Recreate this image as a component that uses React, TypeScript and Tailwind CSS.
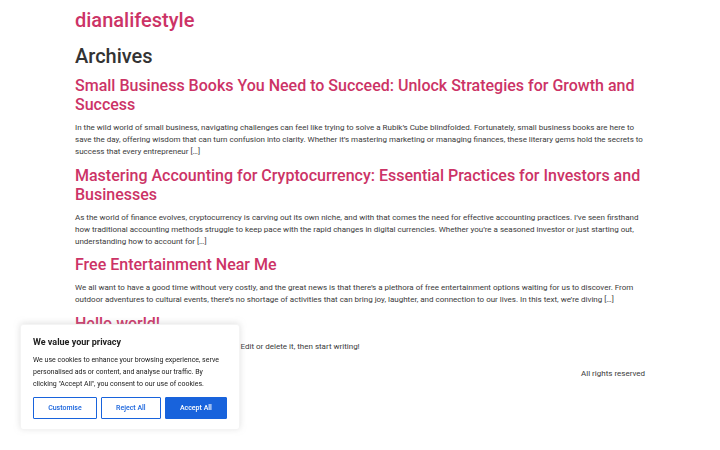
import React from "react";

const pink = "text-[#cc3366]";

function Post({ title, excerpt, first }: { title: string; excerpt: string; first?: boolean }) {
  return (
    <article className="flex flex-col">
      <h2 className={`${first ? "mt-[8px]" : "mt-[7.2px]"} text-[16px] leading-[19.2px] font-medium ${pink}`}>
        <a href="#">{title}</a>
      </h2>
      <p className="mt-[8px] text-[8px] leading-[12px] text-[#3a3a3a]">{excerpt}</p>
    </article>
  );
}

export default function App() {
  return (
    <div
      className="relative min-h-[450px] w-[720px] bg-white"
      style={{ fontFamily: "Roboto, 'Liberation Sans', sans-serif" }}
    >
      <div className="mx-auto flex w-[570px] flex-col">
        <h1 className={`mt-[8px] text-[20px] leading-[24px] font-medium ${pink}`}>
          <a href="#">dianalifestyle</a>
        </h1>
        <h1 className="mt-[12px] text-[20px] leading-[24px] font-medium text-[#333333]">Archives</h1>
        <Post
          first
          title="Small Business Books You Need to Succeed: Unlock Strategies for Growth and Success"
          excerpt="In the wild world of small business, navigating challenges can feel like trying to solve a Rubik’s Cube blindfolded. Fortunately, small business books are here to save the day, offering wisdom that can turn confusion into clarity. Whether it’s mastering marketing or managing finances, these literary gems hold the secrets to success that every entrepreneur […]"
        />
        <Post
          title="Mastering Accounting for Cryptocurrency: Essential Practices for Investors and Businesses"
          excerpt="As the world of finance evolves, cryptocurrency is carving out its own niche, and with that comes the need for effective accounting practices. I’ve seen firsthand how traditional accounting methods struggle to keep pace with the rapid changes in digital currencies. Whether you’re a seasoned investor or just starting out, understanding how to account for […]"
        />
        <Post
          title="Free Entertainment Near Me"
          excerpt="We all want to have a good time without very costly, and the great news is that there’s a plethora of free entertainment options waiting for us to discover. From outdoor adventures to cultural events, there’s no shortage of activities that can bring joy, laughter, and connection to our lives. In this text, we’re diving […]"
        />
        <Post
          title="Hello world!"
          excerpt="Welcome to WordPress. This is your first post. Edit or delete it, then start writing!"
        />
        <footer className="mt-[15.2px] flex justify-end">
          <p className="text-[8px] leading-[12px] text-[#3a3a3a]">All rights reserved</p>
        </footer>
      </div>

      <div className="fixed bottom-[20px] left-[20px] w-[220px] rounded-[3px] border border-[#f4f4f4] bg-white px-[12px] pt-[11px] pb-[10px] shadow-[0_-1px_6px_0_rgba(172,171,171,0.35)]">
        <p className="text-[9px] leading-[12px] font-bold text-[#212121]">We value your privacy</p>
        <p className="mt-[6px] whitespace-nowrap text-[7px] leading-[12px] text-[#212121]">
          We use cookies to enhance your browsing experience, serve
          <br />
          personalised ads or content, and analyse our traffic. By
          <br />
          clicking "Accept All", you consent to our use of cookies.
        </p>
        <div className="mt-[7px] flex gap-[4px]">
          <button className="h-[22px] flex-auto rounded-[1px] border border-[#1863dc] bg-white px-[13px] text-[7px] leading-[12px] font-medium text-[#1863dc]">
            Customise
          </button>
          <button className="h-[22px] flex-auto rounded-[1px] border border-[#1863dc] bg-white px-[13px] text-[7px] leading-[12px] font-medium text-[#1863dc]">
            Reject All
          </button>
          <button className="h-[22px] flex-auto rounded-[1px] border border-[#1863dc] bg-[#1863dc] px-[13px] text-[7px] leading-[12px] font-medium text-white">
            Accept All
          </button>
        </div>
      </div>
    </div>
  );
}
